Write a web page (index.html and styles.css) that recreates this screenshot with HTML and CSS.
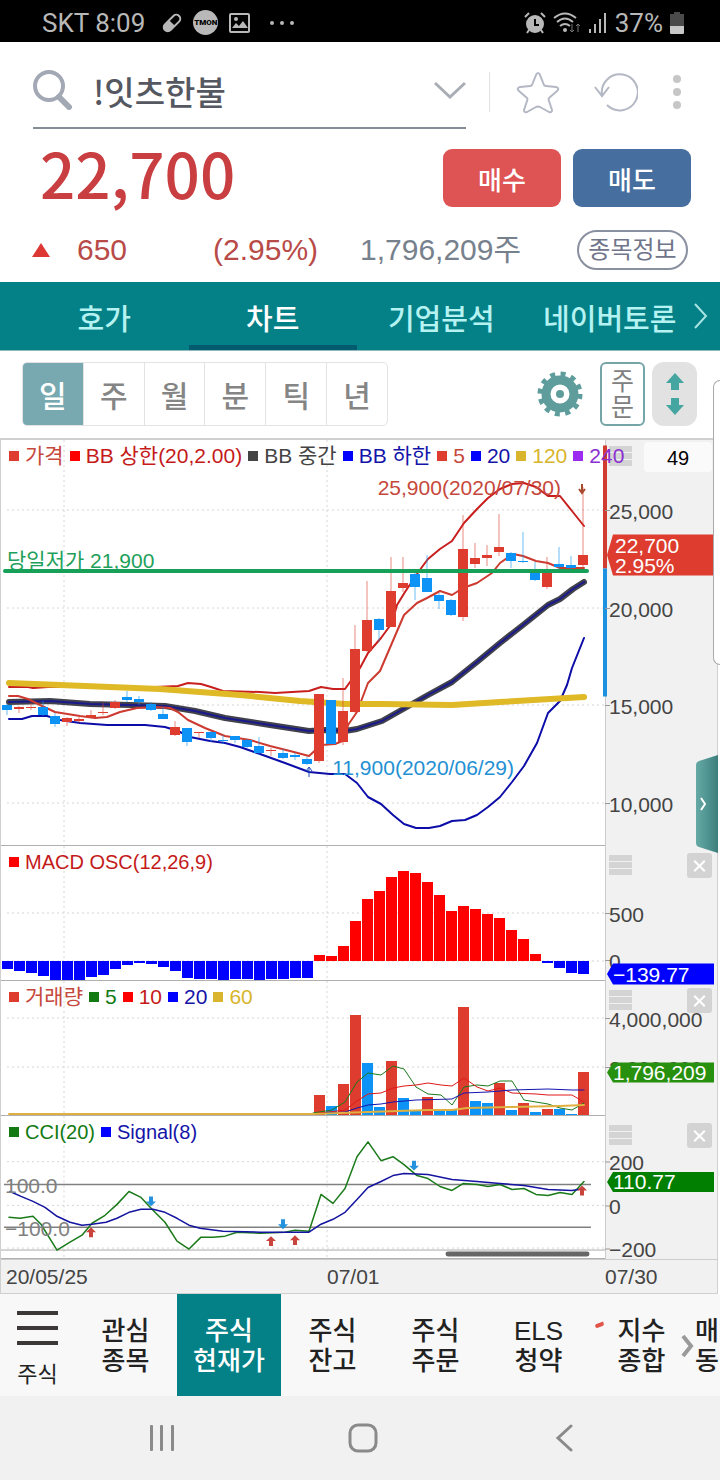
FILE: index.html
```html
<!DOCTYPE html>
<html lang="ko">
<head>
  <meta charset="UTF-8">
  <meta name="viewport" content="width=device-width, initial-scale=1.0">
  <title>주식 현재가</title>
  <link rel="stylesheet" href="styles.css">
</head>
<body>

  <div class="status">
    <span>SKT 8:09</span>
    <svg class="status-pill" width="22" height="22" viewBox="0 0 22 22">
      <g transform="rotate(45 11 11)">
        <rect x="7" y="1" width="8" height="20" rx="4" fill="none" stroke="#b8b8b8" stroke-width="2"/>
        <path d="M7 11h8v6a4 4 0 0 1-8 0z" fill="#b8b8b8"/>
      </g>
    </svg>
    <span class="tmon">TMON</span>
    <svg width="21" height="20" viewBox="0 0 21 20">
      <rect x="1" y="1" width="19" height="18" rx="1" fill="none" stroke="#b8b8b8" stroke-width="2"/>
      <path d="M3 15l4-5 3 3 4-5 5 7z" fill="#b8b8b8"/>
      <circle cx="7" cy="6" r="2" fill="#b8b8b8"/>
    </svg>
    <svg class="status-more" width="24" height="6" viewBox="0 0 24 6" fill="#b8b8b8">
      <circle cx="2" cy="3" r="2"/><circle cx="12" cy="3" r="2"/><circle cx="22" cy="3" r="2"/>
    </svg>
    <div class="status-right">
      <svg width="22" height="22" viewBox="0 0 22 22" fill="none" stroke="#b8b8b8" stroke-width="2">
        <circle cx="11" cy="12" r="8" fill="#b8b8b8"/>
        <path d="M1 5l4-4M21 5l-4-4M5 18l-2 3M17 18l2 3"/>
        <path d="M11 7v6h4" stroke="#000"/>
      </svg>
      <svg width="28" height="22" viewBox="0 0 28 22" fill="none" stroke="#b8b8b8" stroke-width="2">
        <path d="M1 6q11-9 22 0M4 10q8-7 16 0M7 14q5-4 10 0"/>
        <circle cx="12" cy="18" r="1" fill="#b8b8b8"/>
        <path d="M19 12v8m-2-2l2 2 2-2M25 20v-8m-2 2l2-2 2 2" stroke="#777" stroke-width="1"/>
      </svg>
      <svg width="20" height="22" viewBox="0 0 20 22" fill="#b8b8b8">
        <rect x="1" y="17" width="2" height="4"/><rect x="6" y="12" width="2" height="9"/>
        <rect x="11" y="7" width="2" height="14"/><rect x="16" y="1" width="2" height="20"/>
      </svg>
      <span>37%</span>
      <svg width="14" height="22" viewBox="0 0 14 22">
        <path d="M4 0h6v2h4v20H0V2h4z" fill="#4a4a4a"/>
        <path d="M0 14h14v7l-1 1H1l-1-1z" fill="#c8c8c8"/>
      </svg>
    </div>
  </div>

  <header>
    <div class="top">
      <div class="search">
        <svg width="40" height="40" viewBox="0 0 40 40" fill="none" stroke="#a2a8b4">
          <circle cx="16" cy="16" r="14" stroke-width="4"/>
          <path d="M26 27l10 10" stroke-width="6" stroke-linecap="round"/>
        </svg>
        <input type="text" value="!잇츠한불" aria-label="종목 검색">
        <button class="icon" aria-label="목록">
          <svg width="32" height="18" viewBox="0 0 32 18" fill="none" stroke="#a9adb5" stroke-width="3"><path d="M1 2l15 14L31 2"/></svg>
        </button>
      </div>
      <div class="tools">
        <button class="icon" aria-label="관심">
          <svg width="44" height="44" viewBox="0 0 44 44" fill="none" stroke="#b4b8c4" stroke-width="2" stroke-linejoin="round">
            <path d="M22 3Q23 3 24 5L28 15Q29 16 30 16L40 17Q44 18 41 21L33 28Q32 29 33 31L36 40Q36 43 33 42L24 37Q22 36 20 37L11 42Q8 43 8 40L11 31Q12 29 11 28L3 21Q0 18 4 17L14 16Q15 16 16 15L20 5Q21 3 22 3z"/>
          </svg>
        </button>
        <button class="icon" aria-label="새로고침">
          <svg width="44" height="42" viewBox="0 0 44 42" fill="none" stroke="#b4b8c4" stroke-width="2">
            <path d="M8 24A18 18 0 1 1 13 34M1 16l7 9 7-9"/>
          </svg>
        </button>
        <button class="icon" aria-label="더보기">
          <svg width="10" height="36" viewBox="0 0 10 36" fill="#c6c6c6">
            <circle cx="5" cy="5" r="4"/><circle cx="5" cy="18" r="4"/><circle cx="5" cy="31" r="4"/>
          </svg>
        </button>
      </div>
    </div>

    <div class="price-row">
      <strong class="price">22,700</strong>
      <button class="buy">매수</button>
      <button class="sell">매도</button>
    </div>

    <div class="info-row">
      <i class="up"></i>
      <span class="diff">650</span>
      <span class="rate">(2.95%)</span>
      <span class="volume">1,796,209주</span>
      <button class="detail">종목정보</button>
    </div>
  </header>

  <nav class="tabs">
    <a href="#">호가</a>
    <a href="#" class="active">차트</a>
    <a href="#">기업분석</a>
    <a href="#">네이버토론</a>
    <svg width="14" height="26" viewBox="0 0 14 26" fill="none" stroke="#a8e4e4" stroke-width="2"><path d="M1 1l11 12L1 25"/></svg>
  </nav>

  <div class="toolbar">
    <div class="periods">
      <button class="active">일</button>
      <button>주</button>
      <button>월</button>
      <button>분</button>
      <button>틱</button>
      <button>년</button>
    </div>
    <button class="icon gear" aria-label="설정">
      <svg width="46" height="46" viewBox="0 0 46 46">
        <circle cx="23" cy="23" r="20" fill="none" stroke="#5f9d9d" stroke-width="5" stroke-dasharray="5 5.47"/>
        <circle cx="23" cy="23" r="14" fill="none" stroke="#5f9d9d" stroke-width="9"/>
        <circle cx="23" cy="23" r="4" fill="#5f9d9d"/>
      </svg>
    </button>
    <button class="order">주<br>문</button>
    <button class="updown" aria-label="크기 조절">
      <svg width="18" height="44" viewBox="0 0 18 44" fill="#45a5a0">
        <path d="M9 1l9 10h-5v7H5v-7H0zM9 43l9-10h-5v-7H5v7H0z"/>
      </svg>
    </button>
  </div>

  <main class="chart">
    <section class="panel main">
      <div class="plot">
        <svg id="price" viewBox="1 0 604 405" preserveAspectRatio="none"></svg>
        <ul class="legend">
          <li class="tomato">가격</li>
          <li class="red">BB 상한(20,2.00)</li>
          <li class="gray">BB 중간</li>
          <li class="blue">BB 하한</li>
          <li class="tomato">5</li>
          <li class="blue">20</li>
          <li class="gold">120</li>
          <li class="purple">240</li>
        </ul>
        <span class="note high">25,900(2020/07/30)</span>
        <span class="note low">11,900(2020/06/29)</span>
        <span class="note day-low">당일저가 21,900</span>
      </div>
      <div class="axis">
        <svg id="price-axis" viewBox="606 0 111 405"></svg>
        <i class="grip"></i>
        <input class="count" type="text" value="49" aria-label="봉 개수">
      </div>
    </section>

    <section class="panel macd">
      <div class="plot">
        <svg id="macd" viewBox="1 0 604 134" preserveAspectRatio="none"></svg>
        <ul class="legend small"><li class="red">MACD OSC(12,26,9)</li></ul>
      </div>
      <div class="axis">
        <svg id="macd-axis" viewBox="606 0 111 134"></svg>
        <i class="grip"></i>
        <button class="close" aria-label="닫기"></button>
      </div>
    </section>

    <section class="panel vol">
      <div class="plot">
        <svg id="vol" viewBox="1 0 604 134" preserveAspectRatio="none"></svg>
        <ul class="legend">
          <li class="tomato">거래량</li>
          <li class="green">5</li>
          <li class="red">10</li>
          <li class="blue">20</li>
          <li class="gold">60</li>
        </ul>
      </div>
      <div class="axis">
        <i class="grip"></i>
        <button class="close" aria-label="닫기"></button>
        <svg id="vol-axis" viewBox="606 0 111 134"></svg>
      </div>
    </section>

    <section class="panel cci">
      <div class="plot">
        <svg id="cci" viewBox="1 0 604 143" preserveAspectRatio="none"></svg>
        <ul class="legend small">
          <li class="green">CCI(20)</li>
          <li class="blue">Signal(8)</li>
        </ul>
        <span class="note level-up">100.0</span>
        <span class="note level-down">−100.0</span>
      </div>
      <div class="axis">
        <svg id="cci-axis" viewBox="606 0 111 143"></svg>
        <i class="grip"></i>
        <button class="close" aria-label="닫기"></button>
      </div>
    </section>

    <div class="dates">
      <span>20/05/25</span>
      <span>07/01</span>
      <span>07/30</span>
    </div>

    <div class="edge"></div>
    <button class="drawer" aria-label="열기">
      <svg width="22" height="98" viewBox="0 0 22 98">
        <defs>
          <linearGradient id="teal"><stop offset="0" stop-color="#66aaa6"/><stop offset="1" stop-color="#3c7f7d"/></linearGradient>
        </defs>
        <path d="M22 0L3 6Q0 7 0 10v78q0 3 3 4l19 6z" fill="url(#teal)"/>
        <path d="M5 43l4 6-4 6" fill="none" stroke="#fff" stroke-width="2"/>
      </svg>
    </button>
  </main>

  <nav class="menu">
    <a href="#" class="home">
      <i></i><i></i><i></i>
      <span>주식</span>
    </a>
    <a href="#">관심<br>종목</a>
    <a href="#" class="active">주식<br>현재가</a>
    <a href="#">주식<br>잔고</a>
    <a href="#">주식<br>주문</a>
    <a href="#">ELS<br>청약</a>
    <a href="#" class="mark">지수<br>종합</a>
    <a href="#" class="last">매<br>동</a>
    <svg class="next" width="14" height="22" viewBox="0 0 14 22" fill="none" stroke="#9a9a9a" stroke-width="4"><path d="M2 1l8 10-8 10"/></svg>
  </nav>

  <div class="keys">
    <button class="icon" aria-label="최근">
      <svg width="28" height="28" viewBox="0 0 28 28" fill="#8a8a8a">
        <rect x="2" y="1" width="3" height="26" rx="1"/><rect x="12" y="1" width="3" height="26" rx="1"/><rect x="23" y="1" width="3" height="26" rx="1"/>
      </svg>
    </button>
    <button class="icon" aria-label="홈">
      <svg width="30" height="30" viewBox="0 0 30 30"><rect x="2" y="2" width="26" height="26" rx="8" fill="none" stroke="#8a8a8a" stroke-width="3"/></svg>
    </button>
    <button class="icon" aria-label="뒤로">
      <svg width="18" height="28" viewBox="0 0 18 28" fill="none" stroke="#8a8a8a" stroke-width="3" stroke-linecap="round"><path d="M16 2L3 14l13 12"/></svg>
    </button>
  </div>

  <script src="script.js"></script>
</body>
</html>
```

FILE: styles.css
```css
* {
  box-sizing: border-box;
}

body {
  margin: 0;
  background-color: #fff;
  font-family: 'Liberation Sans', 'Noto Sans CJK KR', sans-serif;
  color: #333;
}

button {
  padding: 0;
  border: none;
  background: none;
  font-family: inherit;
  cursor: pointer;
}

a {
  color: inherit;
  text-decoration: none;
}

svg {
  display: block;
}

/* status bar */
.status {
  display: flex;
  align-items: center;
  height: 42px;
  padding: 3px 36px 0 42px;
  background-color: #000;
  color: #b8b8b8;
  font: 26px Roboto, sans-serif;
}

.status-pill {
  margin: 0 10px 0 16px;
}

.tmon {
  width: 25px;
  height: 25px;
  margin-right: 11px;
  border-radius: 50%;
  background-color: #b8b8b8;
  color: #000;
  font: 900 8px/25px Roboto, sans-serif;
  text-align: center;
}

.status-more {
  margin-left: 20px;
}

.status-right {
  display: flex;
  align-items: center;
  gap: 7px;
  margin-left: auto;
}

/* search and price */
header {
  height: 240px;
}

.top {
  display: flex;
  height: 87px;
  padding: 0 38px 0 33px;
}

.search {
  flex: 1;
  display: flex;
  align-items: center;
  min-width: 0;
  border-bottom: 2px solid #858c98;
}

.search svg {
  margin-top: 10px;
}

.search input {
  flex: 1;
  min-width: 0;
  margin: 12px 0 0 20px;
  padding: 0;
  border: none;
  outline: none;
  background: none;
  color: #555861;
  font: 500 33px 'Noto Sans CJK KR', sans-serif;
}

.tools {
  display: flex;
  align-items: center;
  justify-content: space-between;
  width: 193px;
  height: 40px;
  margin: 30px 0 0 23px;
  padding-left: 26px;
  border-left: 1px solid #e2e2e2;
}

.price-row {
  display: flex;
  align-items: center;
  height: 98px;
  padding: 0 29px 0 40px;
}

.price {
  flex: 1;
  padding-bottom: 12px;
  color: #c93e40;
  font: 500 62px/86px 'Noto Sans CJK KR', sans-serif;
}

.buy,
.sell {
  width: 118px;
  height: 58px;
  border-radius: 9px;
  color: #fff;
  font: 500 26px 'Noto Sans CJK KR', sans-serif;
}

.buy {
  margin-right: 12px;
  background-color: #de5455;
}

.sell {
  background-color: #466f9f;
}

.info-row {
  display: flex;
  align-items: center;
  height: 46px;
  padding: 0 32px;
  color: #b84a48;
  font-size: 30px;
  line-height: 30px;
}

.up {
  border: 9px solid transparent;
  border-top: 0;
  border-bottom: 14px solid #dd3733;
}

.diff {
  width: 136px;
  margin-left: 27px;
}

.rate {
  width: 147px;
}

.volume {
  flex: 1;
  color: #77818d;
}

.detail {
  width: 111px;
  height: 40px;
  border: 2px solid #8b90a0;
  border-radius: 20px;
  color: #70758a;
  font-size: 24px;
  line-height: 34px;
}

/* tabs */
.tabs {
  display: flex;
  align-items: center;
  height: 69px;
  padding: 0 12px 0 20px;
  background-color: #048087;
  border-bottom: 1px solid #8fb9bb;
  color: #b5f2f2;
  font: 500 29px 'Noto Sans CJK KR', sans-serif;
}

.tabs a {
  flex: 1;
  height: 68px;
  border-bottom: 5px solid transparent;
  line-height: 70px;
  text-align: center;
  white-space: nowrap;
}

.tabs .active {
  border-bottom-color: #045a6e;
  color: #fff;
}

/* toolbar */
.toolbar {
  display: flex;
  align-items: center;
  height: 87px;
  padding: 0 23px 1px 22px;
}

.periods {
  display: flex;
  width: 366px;
  height: 64px;
  margin-right: auto;
  border: 1px solid #e3e3e3;
  border-radius: 5px;
  overflow: hidden;
}

.periods button {
  flex: 1;
  border-left: 1px solid #e3e3e3;
  color: #858585;
  font-size: 30px;
  font-weight: 500;
}

.periods .active {
  border-left: none;
  background-color: #78a9b0;
  color: #fff;
}

.gear {
  margin-right: 17px;
}

.order {
  width: 45px;
  height: 64px;
  margin-right: 7px;
  border: 2px solid #76a5a8;
  border-radius: 6px;
  color: #808080;
  font-size: 25px;
  line-height: 26px;
}

.updown {
  display: flex;
  align-items: center;
  justify-content: center;
  width: 45px;
  height: 64px;
  border-radius: 12px;
  background-color: #e2e2e2;
}

/* chart */
.chart {
  position: relative;
  margin-right: 2px;
  border: 1px solid #d0d0d0;
  border-top-width: 2px;
}

.panel {
  display: grid;
  grid-template-columns: 1fr 112px;
}

.main {
  height: 406px;
}

.macd,
.vol {
  height: 135px;
}

.cci {
  height: 143px;
}

.plot {
  position: relative;
  min-width: 0;
  border-bottom: 1px solid #b0b0b0;
}

.axis {
  position: relative;
  border-left: 1px solid #ccc;
  background-color: #f1f1f1;
}

.macd .axis {
  z-index: 1;
}

.plot svg,
.axis svg {
  position: absolute;
  top: 0;
  left: 0;
  width: 100%;
  height: 100%;
  overflow: visible;
}

.axis text {
  fill: #444;
  font-size: 21px;
}

.axis .on-tag {
  fill: #fff;
}

.legend {
  position: absolute;
  top: 3px;
  left: 8px;
  z-index: 2;
  display: flex;
  gap: 6px;
  margin: 0;
  padding: 0;
  list-style: none;
  font-size: 21px;
  line-height: 26px;
  white-space: nowrap;
}

.legend.small {
  font-size: 20px;
}

.legend li::before {
  content: '';
  display: inline-block;
  width: 10px;
  height: 10px;
  margin: 0 6px 2px 0;
  background-color: currentColor;
}

.tomato { color: #c6483c; }
.red { color: #c41a1a; }
.gray { color: #444; }
.blue { color: #1414a8; }
.gold { color: #d8b52c; }
.purple { color: #8a30d0; }
.green { color: #137a13; }

.legend .tomato::before { background-color: #dd3c2e; }
.legend .red::before { background-color: #f00; }
.legend .blue::before { background-color: #00f; }
.legend .purple::before { background-color: #9b2bf0; }

.note {
  position: absolute;
  font-size: 21px;
  line-height: 24px;
  white-space: nowrap;
}

.high {
  top: 36px;
  right: 44px;
  color: #c6483c;
}

.low {
  top: 316px;
  right: 91px;
  color: #2490d4;
}

.day-low {
  top: 109px;
  left: 6px;
  color: #1ea05a;
}

.level-up,
.level-down {
  left: 4px;
  color: #808080;
}

.level-up {
  top: 58px;
}

.level-down {
  top: 101px;
}

.grip {
  position: absolute;
  top: 9px;
  left: 3px;
  width: 23px;
  height: 20px;
  background: repeating-linear-gradient(#d4d4d4 0 6px, #f1f1f1 6px 7px);
}

.main .grip {
  top: 6px;
}

.count {
  position: absolute;
  top: 2px;
  right: 5px;
  width: 68px;
  height: 30px;
  padding: 2px 0 0;
  border: none;
  border-radius: 4px;
  background-color: #fafafa;
  color: #000;
  font: 20px 'Liberation Sans', sans-serif;
  text-align: center;
}

.close {
  position: absolute;
  top: 7px;
  right: 5px;
  width: 25px;
  height: 25px;
  border-radius: 3px;
  background-color: #d3d3d3;
}

.close::before,
.close::after {
  content: '';
  position: absolute;
  top: 12px;
  left: 5px;
  width: 15px;
  height: 2px;
  background-color: #fff;
  transform: rotate(45deg);
}

.close::after {
  transform: rotate(-45deg);
}

.dates {
  display: grid;
  grid-template-columns: 321px 1fr 112px;
  height: 34px;
  padding-left: 5px;
  border-top: 1px solid #ccc;
  background-color: #f1f1f1;
  color: #444;
  font-size: 21px;
  line-height: 34px;
}

.edge {
  position: absolute;
  top: -60px;
  right: -3px;
  z-index: 3;
  width: 7px;
  height: 285px;
  border: 1px solid #aaa;
  border-right: none;
  border-radius: 10px 0 0 10px;
  background-color: #fff;
}

.drawer {
  position: absolute;
  top: 315px;
  right: -1px;
  z-index: 3;
}

/* bottom menu */
.menu {
  position: relative;
  display: flex;
  height: 102px;
  overflow: hidden;
  background-color: #f8f8f8;
  color: #222;
  font: 500 26px/30px 'Liberation Sans', 'Noto Sans CJK KR', sans-serif;
  text-align: center;
}

.menu a {
  flex: 0 0 103px;
  padding-top: 22px;
}

.menu .active {
  flex-basis: 104px;
  background-color: #048087;
  color: #fff;
}

.menu .home {
  flex-basis: 74px;
  padding: 17px 16px 0 17px;
  font-size: 22px;
  font-weight: 400;
}

.home i {
  display: block;
  height: 4px;
  margin-bottom: 11px;
  background-color: #3c3838;
}

.home span {
  display: block;
  margin-top: 15px;
  white-space: nowrap;
}

.menu .last {
  padding-left: 2px;
  text-align: left;
}

.mark {
  position: relative;
}

.mark::before {
  content: '';
  position: absolute;
  top: 29px;
  left: 5px;
  width: 9px;
  height: 4px;
  border-radius: 4px 0 4px 4px;
  background-color: #e05548;
  transform: rotate(-20deg);
}

.next {
  position: absolute;
  top: 41px;
  right: 25px;
}

/* system keys */
.keys {
  display: flex;
  height: 84px;
  padding: 0 55px 0 61px;
  background-color: #f1f1f1;
}

.keys button {
  flex: 1;
  display: flex;
  align-items: center;
  justify-content: center;
}
```

FILE: script.js
```js
const RED = '#dd3c2e';
const BLUE = '#0d93f5';
const STEP = 12;
const FIRST = 7;

// high, body top, body bottom, low, u(p) or d(own)
const candles = [
  [264, 265, 270, 275, 'd'], [266, 267, 269, 273, 'u'], [263, 267, 268, 270, 'u'], [261, 267, 275, 276, 'd'],
  [273, 276, 284, 287, 'd'], [277, 278, 282, 286, 'u'], [277, 279, 281, 283, 'u'], [270, 275, 277, 278, 'u'],
  [263, 272, 273, 275, 'u'], [260, 262, 268, 269, 'u'], [251, 257, 260, 262, 'd'], [256, 259, 262, 265, 'd'],
  [262, 264, 270, 271, 'd'], [267, 274, 279, 279, 'd'], [281, 287, 295, 296, 'u'], [288, 288, 302, 306, 'd'],
  [292, 292, 293, 298, 'u'], [291, 292, 298, 302, 'd'], [295, 300, 301, 304, 'd'], [296, 296, 300, 303, 'd'],
  [299, 300, 307, 308, 'd'], [297, 306, 313, 315, 'd'], [308, 310, 311, 316, 'u'], [309, 313, 318, 319, 'd'],
  [313, 315, 317, 320, 'd'], [317, 319, 324, 325, 'd'], [254, 254, 321, 323, 'u'], [260, 260, 304, 304, 'd'],
  [238, 271, 302, 305, 'u'], [185, 209, 272, 273, 'u'], [141, 180, 211, 212, 'u'], [178, 179, 190, 202, 'd'],
  [117, 151, 187, 187, 'u'], [117, 143, 148, 152, 'u'], [133, 134, 147, 160, 'd'], [115, 138, 152, 152, 'd'],
  [153, 155, 161, 169, 'd'], [159, 160, 175, 176, 'd'], [75, 109, 177, 181, 'u'], [103, 118, 124, 128, 'u'],
  [105, 115, 118, 126, 'u'], [74, 107, 112, 116, 'u'], [112, 113, 121, 128, 'd'], [92, 121, 122, 123, 'd'],
  [122, 132, 140, 141, 'd'], [117, 132, 147, 149, 'u'], [107, 124, 127, 130, 'd'], [116, 125, 128, 129, 'd'],
  [47, 115, 125, 128, 'u']
];

const osc = [-8, -10, -12, -15, -19, -19, -19, -16, -14, -8, -4, -2, -3, -6, -10, -17, -18, -18, -19, -18,
  -18, -19, -18, -18, -17, -17, 6, 5, 15, 40, 62, 70, 84, 90, 88, 79, 66, 50, 55, 52, 47, 43, 31, 22, 7,
  -2, -7, -12, -13];

// bars start at the 27th candle
const volumes = [20, 9, 31, 100, 52, 8, 54, 17, 5, 18, 5, 5, 108, 14, 12, 32, 5, 12, 3, 6, 6, 1, 43];
const volumeDirs = 'uduudduddudduddudududdu';

const line = (points, color, width) =>
  `<polyline points="${points}" fill="none" stroke="${color}" stroke-width="${width}" stroke-linejoin="round" stroke-linecap="round"/>`;
const rect = (x, y, w, h, color) => `<rect x="${x}" y="${y}" width="${w}" height="${h}" fill="${color}"/>`;

function grid(rows, height) {
  const h = rows.map(y => `M7 ${y}H604`).join('');
  return `<path d="${h}M64 0V${height}M327 0V${height}" stroke="#d6d6d6" stroke-dasharray="2 3" fill="none"/>`;
}

function labels(items) {
  return items.map(([y, text]) =>
    `<path d="M605 ${y}h5" stroke="#999"/><text x="609" y="${y + 8}">${text}</text>`).join('');
}

function tag(top, bottom, color, rows) {
  const mid = (top + bottom) / 2;
  return `<path d="M607 ${mid}L613 ${top}H714V${bottom}H613z" fill="${color}"/>` +
    rows.map(([x, y, text]) => `<text class="on-tag" x="${x}" y="${y}">${text}</text>`).join('');
}

function draw(id, html) {
  document.getElementById(id).innerHTML = html;
}

// price
const mid = '9,262 50,261 90,264 130,265 165,266 195,271 225,278 270,285 309,291 325,290 345,291 357,289 382,281 405,268 428,255 452,242 477,222 500,203 523,185 548,165 560,159 573,149 584,142';

draw('price',
  grid([70, 168, 265, 363], 405) +
  line('9,247 28,247 33,248 48,247 155,247 178,246 188,243 201,244 211,247 223,251 260,252 275,253 309,251 321,247 333,249 345,249 350,242 360,228 368,213 381,198 392,183 397,165 405,152 415,137 422,127 428,119 440,109 452,101 464,83 477,69 488,58 500,49 512,44 524,43 536,47 548,56 560,56 572,71 584,86', '#c81e1e', 2) +
  line(mid, '#42424c', 6) +
  line(mid, '#1a1a8c', 2) +
  line('9,279 22,279 32,276 47,276 60,280 80,283 107,285 145,285 165,287 178,291 190,297 210,301 225,303 240,307 260,314 285,323 309,332 330,334 345,334 357,343 368,357 381,364 393,375 404,384 416,388 429,388 440,386 452,381 465,380 477,375 488,367 500,357 512,342 524,326 537,303 548,273 560,261 567,245 572,228 584,198', '#0c0ca8', 2) +
  line('9,256 18,256 28,259 40,265 55,272 80,276 95,278 107,277 120,272 137,268 155,267 170,268 178,272 188,280 205,288 225,296 250,300 270,306 290,311 309,316 321,305 335,304 345,300 348,285 357,272 368,243 380,231 392,203 404,175 417,163 427,158 440,151 452,155 463,148 477,143 492,133 500,123 513,114 523,116 536,121 548,123 560,128 584,128', '#cc3a30', 2) +
  line('9,243 60,245 160,249 240,255 300,261 345,264 382,264 452,265 500,262 584,257', '#dfb926', 6) +
  candles.map(([high, top, bottom, low, dir], i) => {
    const x = FIRST + i * STEP;
    const color = dir === 'u' ? RED : BLUE;
    return `<path d="M${x} ${high}V${low}" stroke="${color}" opacity=".6"/>` +
      rect(x - 5, top, 10, bottom - top, color);
  }).join('') +
  line('5,131 587,131', '#16a058', 4) +
  '<path d="M582 44v8m-3-3l3 4 3-4" fill="none" stroke="#a84a30" stroke-width="2"/>' +
  '<path d="M309 337v-9m-3 3l3-4 3 4" fill="none" stroke="#1a4ab8" stroke-width="1"/>'
);
draw('price-axis',
  rect(603, 5, 4, 123, '#d03c30') + rect(603, 128, 4, 128, '#1c92e0') +
  labels([[70, '25,000'], [168, '20,000'], [265, '15,000'], [363, '10,000']]) +
  tag(94, 135, RED, [[615, 112, '22,700'], [615, 132, '2.95%']])
);

// macd
draw('macd',
  grid([67, 115], 134) +
  osc.map((v, i) => rect(FIRST + i * STEP - 5, v > 0 ? 115 - v : 115, 11, Math.abs(v), v > 0 ? '#f00' : '#00f')).join('')
);
draw('macd-axis',
  labels([[67, '500'], [114, '0']]) +
  tag(117, 138, '#00f', [[613, 135, '−139.77']])
);

// volume
draw('vol',
  grid([37, 86], 134) +
  volumes.map((v, i) => rect(FIRST + (i + 26) * STEP - 5, 134 - v, 11, v, volumeDirs[i] === 'u' ? RED : BLUE)).join('') +
  line('313,132 332,129 345,121 357,101 368,92 381,94 393,85 404,88 416,106 428,113 441,114 452,124 464,106 477,104 488,105 500,100 512,100 524,119 536,121 548,123 560,127 572,129 584,122', '#1a7a1a', 1) +
  line('313,133 345,129 357,120 368,113 381,112 393,107 404,105 416,104 428,102 441,104 452,105 464,97 477,106 488,110 500,107 512,112 536,113 548,114 572,114 584,121', '#e01818', 1) +
  line('313,133 345,131 357,127 368,124 381,123 393,121 416,119 452,118 464,112 488,111 512,109 548,108 572,109 584,109', '#1414b0', 1) +
  line('9,133 313,133 368,131 428,129 452,129 467,127 512,126 560,125 584,124', '#dfb040', 2)
);
draw('vol-axis',
  labels([[37, '4,000,000'], [86, '2,000,000']]) +
  tag(81, 101, '#27900f', [[613, 98, '1,796,209']])
);

// cci
const arrow = (x, y, color, turn) =>
  `<path d="M0 -5L5 0H2V5H-2V0H-5z" fill="${color}" transform="translate(${x} ${y}) rotate(${turn})"/>`;

draw('cci',
  grid([46, 90, 133], 143) +
  '<path d="M4 69H591M4 112H591" stroke="#808080" stroke-width="1.5"/>' +
  '<path d="M1 135H605" stroke="#aaa"/>' +
  line('9,102 20,103 33,101 41,109 57,135 70,127 82,120 92,108 105,100 117,89 129,76 141,82 153,95 165,107 177,126 189,134 201,122 213,122 225,121 237,117 260,118 285,117 295,115 309,116 321,79 333,88 345,73 357,41 368,26 381,45 393,41 404,49 417,60 428,63 440,71 452,75 463,68 477,69 488,71 500,69 512,74 524,73 536,79 548,80 560,77 572,79 584,66', '#1a7a1a', 1.5) +
  line('10,76 21,81 33,86 45,92 57,101 70,107 82,110 92,109 106,107 117,103 129,97 141,94 153,94 165,97 177,103 189,110 200,113 223,116 260,117 309,117 321,109 333,104 345,97 357,84 368,72 381,66 393,60 404,58 428,59 452,64 477,66 500,68 524,70 548,74 572,75 584,73', '#1414a0', 1.5) +
  [[91, 117], [271, 126], [295, 125], [582, 75]].map(([x, y]) => arrow(x, y, '#c8443c', 0)).join('') +
  [[151, 86], [283, 109], [414, 50]].map(([x, y]) => arrow(x, y, '#2492dc', 180)).join('') +
  line('448,139 587,139', '#666', 5)
);
draw('cci-axis',
  labels([[46, '200'], [90, '0'], [133, '−200']]) +
  tag(56, 76, '#007f00', [[613, 73, '110.77']])
);
```
